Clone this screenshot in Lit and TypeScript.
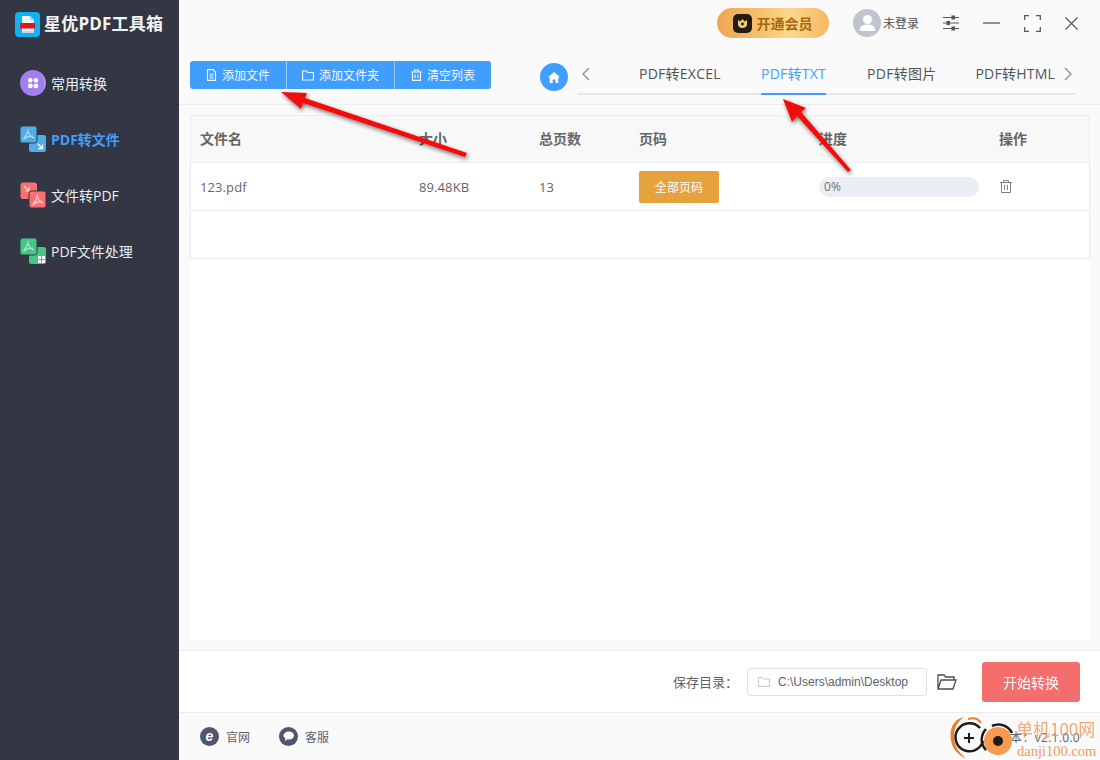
import { LitElement, html, css, svg } from "lit";
import { customElement } from "lit/decorators.js";

const pdfGlyph = (x: number, y: number, s: number) => svg`<path transform="translate(${x} ${y}) scale(${s})" d="M6.500 1 C6 4 5 7 1.500 11.500 M6.500 4 C7 7 9 9 12 10 M2 11 C4 9 7 8 11 8" fill="none" stroke="#fff" stroke-opacity=".65" stroke-width="1.100"/>`;

const dualIcon = (a: string, kind: string) => {
  const back = svg`<rect x="0.500" y="0.500" width="16.500" height="16.500" rx="2.500" fill=${a}/>`;
  const backTop = svg`<rect x="0" y="0" width="17" height="17" rx="2.500" fill=${a} stroke="#333743" stroke-width="1"/>`;
  const lower = svg`<rect x="9" y="9" width="17" height="17" rx="2.500" fill=${a}/>`;
  const lowerTop = svg`<rect x="9" y="9" width="17" height="17" rx="2.500" fill=${a} stroke="#333743" stroke-width="1"/>`;
  return html`<svg class="nav-ic" width="26" height="26" viewBox="0 0 26 26">
    ${kind === "to-pdf"
      ? svg`${back}<path d="M4 4l5 5m0-4v4H5" fill="none" stroke="#fff" stroke-opacity=".75" stroke-width="1.200"/>${lowerTop}${pdfGlyph(11, 11, 1.05)}`
      : svg`${lower}${backTop}${pdfGlyph(2, 2, 1)}`}
    ${kind === "to-file" ? svg`<path d="M18 18l4.500 4.500m0-4v4h-4" fill="none" stroke="#fff" stroke-width="1.300"/>` : ""}
    ${kind === "tools" ? svg`<path d="M18 18h3v3h-3zM22 18h3v3h-3zM18 22h3v3h-3zM22 22h3v3h-3z" fill="#fff"/>` : ""}
  </svg>`;
};

@customElement("app-root")
export class AppRoot extends LitElement {
  static styles = css`
    :host { display: block; width: 1100px; height: 760px; position: relative; overflow: hidden;
      font-family: "Open Sans", "Noto Sans CJK SC", sans-serif; color: #606266; background: #fafafa; }
    * { box-sizing: border-box; }
    .app { display: flex; width: 100%; height: 100%; }
    .side { width: 179px; flex: none; background: #333743; display: flex; flex-direction: column; }
    .brand { display: flex; align-items: center; gap: 4px; height: 49px; padding-left: 15px; color: #f4f5f7;
      font-size: 17px; font-weight: 700; letter-spacing: .2px; }
    .brand span { padding-bottom: 4px; }
    .nav { display: flex; flex-direction: column; padding-top: 7px; margin-top: -1px; }
    .nav-item { display: flex; align-items: center; gap: 5px; height: 56px; padding-left: 20px; color: #eceef2; font-size: 14px; }
    .nav-item.on { color: #409eff; font-weight: 700; }
    .nav-ic { flex: none; display: block; }
    .main { flex: 1; min-width: 0; display: flex; flex-direction: column; background: #fafafa; }
    .top { height: 46px; flex: none; display: flex; align-items: center; justify-content: flex-end; }
    .vip { width: 112px; height: 30px; border-radius: 15px; display: flex; align-items: center; justify-content: center; gap: 4px;
      margin-right: 24px; background: linear-gradient(90deg, #efa653 0%, #f6c26f 40%, #fbd88f 65%, #f6b962 100%);
      color: #a8680c; font-size: 14px; font-weight: 700; }
    .user { display: flex; align-items: center; gap: 2px; font-size: 12px; color: #4c4f55; margin-right: 24px; }
    .ctrl { display: flex; align-items: center; gap: 24px; margin-right: 22px; }
    .ctrl svg { display: block; }
    .tools { height: 59px; flex: none; display: flex; border-bottom: 1px solid #eeeff1; padding-left: 11px; }
    .btns { display: flex; height: 28px; width: 301px; margin-top: 15px; background: #409eff; border-radius: 3px; color: #f3f8ff; font-size: 12px; }
    .btn { display: flex; align-items: center; justify-content: center; gap: 5px; border-left: 1px solid #9ccaf9; }
    .btn:first-child { border-left: none; width: 96px; }
    .btn:nth-child(2) { width: 108px; }
    .btn:nth-child(3) { width: 97px; }
    .tabs-wrap { display: flex; margin-left: 49px; margin-top: 17px; align-items: flex-start; }
    .home { width: 28px; height: 28px; border-radius: 50%; background: #409eff; display: flex; align-items: center; justify-content: center; flex: none; }
    .tabs { width: 497px; margin-left: 10px; height: 32px; border-bottom: 2px solid #e4e7ed; display: flex; align-items: flex-start; }
    .chev { flex: none; height: 22px; display: flex; align-items: center; justify-content: center; }
    .chev.prev { width: 16px; }
    .chev.next { width: 25px; }
    .tab { flex: none; height: 32px; line-height: 22px; font-size: 14px; letter-spacing: .25px; color: #505255; white-space: nowrap; }
    .tab.excel { margin-left: 45px; width: 122px; }
    .tab.gap { margin-left: 41px; }
    .tab.last { margin-left: 39px; }
    .tab.on { color: #409eff; border-bottom: 2px solid #409eff; }
    .list { flex: 1; min-height: 0; padding: 10px 10px 0 11px; display: flex; }
    .panel { flex: 1; background: #fff; }
    .grid { border: 1px solid #ebeef0; }
    .row { display: grid; grid-template-columns: 219px 120px 100px 180px 180px 1fr; height: 48px; align-items: center; padding-left: 9px; border-top: 1px solid #ebeef0; font-size: 13px; color: #666; letter-spacing: .1px; }
    .row.head { height: 46px; border-top: none; background: #f8f8f8; font-weight: 700; font-size: 14px; color: #666; padding-bottom: 3px; letter-spacing: 0; }
    .row.empty { display: block; }
    .pick { width: 80px; height: 32px; background: #e6a23c; border-radius: 2px; color: #fff; font-size: 12px; display: flex; align-items: center; justify-content: center; }
    .bar { width: 160px; height: 20px; border-radius: 10px; background: #ebeef5; font-size: 12px; color: #707276; display: flex; align-items: center; padding-left: 5px; }
    .trash { display: block; margin-left: 1px; }
    .save { margin-top: 10px; height: 63px; flex: none; background: #fff; border-top: 1px solid #ecedef; border-bottom: 1px solid #ecedef;
      display: flex; align-items: center; justify-content: flex-end; padding-right: 20px; }
    .save-l { font-size: 13px; color: #606266; margin-right: 9px; }
    .path { width: 180px; height: 28px; border: 1px solid #dcdfe6; border-radius: 4px; display: flex; align-items: center; gap: 8px; padding-left: 10px;
      font-family: "Liberation Sans", sans-serif; font-size: 12px; color: #606266; }
    .open { margin: 0 25px 0 10px; display: block; }
    .start { width: 98px; height: 40px; background: #f56c6c; border-radius: 3px; color: #fff; font-size: 14px; display: flex; align-items: center; justify-content: center; opacity: .98; }
    .foot { height: 47px; flex: none; display: flex; align-items: center; padding-left: 21px; gap: 29px; font-size: 12px; color: #5b6170; }
    .foot-i { display: flex; align-items: center; gap: 7px; }
    .ver { margin-left: auto; margin-right: 20px; font-size: 12px; color: #606266; letter-spacing: .3px; }
    .arrows { position: absolute; left: 0; top: 0; pointer-events: none; }
    .mark { position: absolute; left: 950px; top: 716px; width: 150px; height: 44px; }
    .mark-ic { position: absolute; left: 0; top: 0; }
    .mark-a { position: absolute; left: 66px; top: 1px; color: #f39a5c; opacity: .85; font-size: 17px; font-family: "Noto Sans CJK SC", sans-serif; line-height: 24px; white-space: nowrap; }
    .mark-b { position: absolute; left: 67px; top: 26px; color: #f39a5c; font-size: 14.500px; font-family: "Liberation Serif", serif; line-height: 18px; white-space: nowrap; }
  `;

  render() {
    return html`<div class="app">
      <aside class="side">
        <div class="brand">
          <svg width="25" height="25" viewBox="0 0 25 25">
            <rect width="25" height="25" rx="4" fill="#0cb4f5"/>
            <path d="M7 4h8l4 4v13H7z" fill="#eef3f6"/><path d="M15 4l4 4h-4z" fill="#bcd"/>
            <rect x="5" y="11" width="15" height="5.500" fill="#e8141c"/>
            <rect x="7" y="19" width="12" height="2" fill="#cfd6db"/>
          </svg>
          <span>星优PDF工具箱</span>
        </div>
        <nav class="nav">
          <div class="nav-item">
            <svg class="nav-ic" width="26" height="26" viewBox="0 0 26 26">
              <circle cx="13" cy="13" r="13" fill="#a17ff2"/>
              <path d="M20 3a13 13 0 0 1 3 18a18 18 0 0 0-3-18z" fill="#b9a0f6"/>
              <rect x="8" y="8" width="4.600" height="4.600" rx="2" fill="#fff"/><rect x="13.600" y="8" width="4.600" height="4.600" rx="2" fill="#fff"/>
              <rect x="8" y="13.600" width="4.600" height="4.600" rx="2" fill="#fff"/><rect x="13.600" y="13.600" width="4.600" height="4.600" rx="2" fill="#fff"/>
            </svg>
            <span>常用转换</span>
          </div>
          <div class="nav-item on">${dualIcon("#4faee8", "to-file")}<span>PDF转文件</span></div>
          <div class="nav-item">${dualIcon("#f96f72", "to-pdf")}<span>文件转PDF</span></div>
          <div class="nav-item">${dualIcon("#46c686", "tools")}<span>PDF文件处理</span></div>
        </nav>
      </aside>
      <main class="main">
        <header class="top">
          <div class="vip">
            <svg width="19" height="19" viewBox="0 0 19 19"><rect width="19" height="19" rx="5" fill="#221c14"/><path d="M5 6l2.300 1.600L9.500 5l2.200 2.600L14 6v4.500c0 2-2.500 3.500-4.500 3.500S5 12.500 5 10.500z" fill="#f5c878"/><circle cx="9.500" cy="10" r="1.400" fill="#221c14"/></svg>
            <span>开通会员</span>
          </div>
          <div class="user">
            <svg width="28" height="28" viewBox="0 0 28 28"><circle cx="14" cy="14" r="14" fill="#c0c4cc"/><circle cx="14.500" cy="10.500" r="4.500" fill="#fff"/><path d="M7 21c0-4 3-5.500 7.500-5.500S22 17 22 21c0 .8-.6 1-1 1H8c-.4 0-1-.2-1-1z" fill="#fff"/></svg>
            <span>未登录</span>
          </div>
          <div class="ctrl">
            <svg width="16" height="16" viewBox="0 0 16 16" fill="none" stroke="#55585e" stroke-width="1.100"><path d="M0 2.500h16M0 8h16M0 13.500h16"/><rect x="9" y="1" width="2.500" height="3" fill="#55585e"/><rect x="4" y="6.500" width="2.500" height="3" fill="#55585e"/><rect x="9" y="12" width="2.500" height="3" fill="#55585e"/></svg>
            <svg width="17" height="16" viewBox="0 0 17 16" fill="none" stroke="#55585e" stroke-width="1.300"><path d="M0 8h17"/></svg>
            <svg width="17" height="17" viewBox="0 0 17 17" fill="none" stroke="#55585e" stroke-width="1.300"><path d="M.7 5V.7H5M12 .7h4.300V5M16.300 12v4.300H12M5 16.300H.7V12"/></svg>
            <svg width="13" height="13" viewBox="0 0 13 13" fill="none" stroke="#55585e" stroke-width="1.200"><path d="M.5.500l12 12M12.500.500l-12 12"/></svg>
          </div>
        </header>
        <section class="tools">
          <div class="btns">
            <div class="btn">
              <svg width="11" height="12" viewBox="0 0 11 12" fill="none" stroke="#f3f8ff" stroke-width="1.100"><path d="M1.500.6h5.500l2.500 2.500v8.300h-8zM3.500 5h4M3.500 7h4M3.500 9h4"/></svg>
              <span>添加文件</span>
            </div>
            <div class="btn">
              <svg width="12" height="11" viewBox="0 0 12 11" fill="none" stroke="#f3f8ff" stroke-width="1.100"><path d="M.6 1h4l1 1.500h5.800v7.500H.6z"/></svg>
              <span>添加文件夹</span>
            </div>
            <div class="btn">
              <svg width="11" height="12" viewBox="0 0 11 12" fill="none" stroke="#f3f8ff" stroke-width="1.100"><path d="M0 3h11M3.500 3V1h4v2M1.500 3v8.400h8V3M4 5.500v3.500M7 5.500v3.500"/></svg>
              <span>清空列表</span>
            </div>
          </div>
          <div class="tabs-wrap">
            <div class="home"><svg width="12" height="11" viewBox="0 0 12 11"><path d="M6 0L0 5.200h1.700V11h3V7.500h2.600V11h3V5.200H12z" fill="#fff"/></svg></div>
            <div class="tabs">
              <div class="chev prev"><svg width="8" height="14" viewBox="0 0 8 14" fill="none" stroke="#8a8c90" stroke-width="1.300"><path d="M7 1L1 7l6 6"/></svg></div>
              <div class="tab excel">PDF转EXCEL</div>
              <div class="tab on">PDF转TXT</div>
              <div class="tab gap">PDF转图片</div>
              <div class="tab last">PDF转HTML</div>
              <div class="chev next"><svg width="8" height="14" viewBox="0 0 8 14" fill="none" stroke="#8a8c90" stroke-width="1.300"><path d="M1 1l6 6-6 6"/></svg></div>
            </div>
          </div>
        </section>
        <section class="list">
          <div class="panel">
            <div class="grid">
              <div class="row head"><span>文件名</span><span>大小</span><span>总页数</span><span>页码</span><span>进度</span><span>操作</span></div>
              <div class="row">
                <span>123.pdf</span><span>89.48KB</span><span>13</span>
                <span><div class="pick">全部页码</div></span>
                <span><div class="bar">0%</div></span>
                <span><svg class="trash" width="12" height="13" viewBox="0 0 12 13" fill="none" stroke="#7d7f83" stroke-width="1"><path d="M0 2.500h12M3.500 2.500V.6h5v1.900M1.500 2.500v10h9v-10M4.500 5v5M7.500 5v5"/></svg></span>
              </div>
              <div class="row empty"></div>
            </div>
          </div>
        </section>
        <section class="save">
          <span class="save-l">保存目录：</span>
          <div class="path">
            <svg width="12" height="10" viewBox="0 0 12 10" fill="none" stroke="#c4c6cc" stroke-width="1"><path d="M.5.500h4l1 1.500h6v7.500H.5z"/></svg>
            <span>C:\\Users\\admin\\Desktop</span>
          </div>
          <svg class="open" width="20" height="16" viewBox="0 0 20 16" fill="none" stroke="#4a4d52" stroke-width="1.300"><path d="M1 15V1h6l1.500 2H17v3M1 15h15l3-9H4z"/></svg>
          <div class="start">开始转换</div>
        </section>
        <footer class="foot">
          <div class="foot-i">
            <svg width="19" height="19" viewBox="0 0 19 19"><circle cx="9.500" cy="9.500" r="9.500" fill="#4f566e"/><text x="9.500" y="14" text-anchor="middle" font-size="14" font-weight="700" font-style="italic" fill="#fff" font-family="Liberation Sans">e</text></svg>
            <span>官网</span>
          </div>
          <div class="foot-i">
            <svg width="19" height="19" viewBox="0 0 19 19"><circle cx="9.500" cy="9.500" r="9.500" fill="#4f566e"/><path d="M10 4.500c3 0 5 1.800 5 4s-2 4-5 4c-.5 0-1 0-1.500-.2L6 14l.3-2.800C5 10.500 4.500 9.500 4.500 8.500c0-2.200 2.500-4 5.500-4z" fill="#fff"/></svg>
            <span>客服</span>
          </div>
          <span class="ver">版本：v2.1.0.0</span>
        </footer>
      </main>
    </div>
    <svg class="arrows" width="1100" height="760" viewBox="0 0 1100 760">
      <defs><filter id="sh" x="-20%" y="-20%" width="140%" height="140%"><feDropShadow dx="1" dy="2" stdDeviation="2" flood-color="#000" flood-opacity=".55"/></filter></defs>
      <g filter="url(#sh)" fill="#f00f0f">
        <path d="M467 153L305 98L307 93L281 92L301 109L303 103L465 157z"/>
        <path d="M851 170L801 112L806 108L783 99L792 122L797 116L848 172z"/>
      </g>
    </svg>
    <div class="mark">
      <svg class="mark-ic" width="72" height="44" viewBox="0 0 72 44">
        <path d="M14 1C3 3-1 14 1 24c1 8 6 14 15 19c-5-6-11-10-12-20C3 13 7 6 14 1z" fill="#f47b20"/>
        <path d="M18 3C25 1 29 4 31 7" fill="none" stroke="#f47b20" stroke-width="2"/>
        <path d="M30 12A14 14 0 1 0 33 25" fill="none" stroke="#1c1c1c" stroke-width="2.500"/>
        <path d="M19 17v10M14 22h10" stroke="#1c1c1c" stroke-width="2"/>
        <circle cx="48" cy="25" r="14" fill="#f79a4d"/>
        <path d="M36 13A15 15 0 0 0 36 34M42 10A15 15 0 0 1 62 17" fill="none" stroke="#1c1c1c" stroke-width="2.500"/>
        <circle cx="48" cy="25" r="5" fill="#1c1c1c"/>
      </svg>
      <span class="mark-a">单机100网</span>
      <span class="mark-b">danji100.com</span>
    </div>`;
  }
}
